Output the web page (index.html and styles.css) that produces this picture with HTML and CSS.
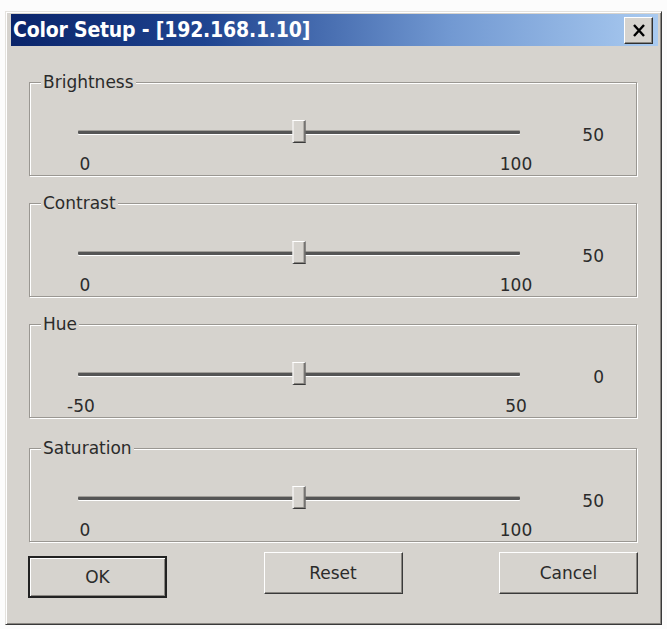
FILE: index.html
```html
<!DOCTYPE html>
<html lang="en">
<head>
  <meta charset="UTF-8" />
  <meta name="viewport" content="width=device-width, initial-scale=1" />
  <title>Color Setup</title>
  <link rel="stylesheet" href="styles.css">
</head>
<body>

  <div class="window">
    <div class="titlebar">
      <span class="title">Color Setup - [192.168.1.10]</span>
      <button class="close" title="Close">
        <svg width="14" height="13" viewBox="0 0 14 13">
          <path d="M2 1 L12 12 M12 1 L2 12" stroke="#000" stroke-width="2.4" fill="none" />
        </svg>
      </button>
    </div>

    <div class="content">
      <fieldset class="group">
        <legend>Brightness</legend>
        <div class="control">
          <div class="slider"><span class="thumb" style="left: 50%"></span></div>
          <span class="value">50</span>
        </div>
        <div class="scale"><span>0</span><span>100</span></div>
      </fieldset>

      <fieldset class="group">
        <legend>Contrast</legend>
        <div class="control">
          <div class="slider"><span class="thumb" style="left: 50%"></span></div>
          <span class="value">50</span>
        </div>
        <div class="scale"><span>0</span><span>100</span></div>
      </fieldset>

      <fieldset class="group">
        <legend>Hue</legend>
        <div class="control">
          <div class="slider"><span class="thumb" style="left: 50%"></span></div>
          <span class="value">0</span>
        </div>
        <div class="scale"><span class="neg">-50</span><span>50</span></div>
      </fieldset>

      <fieldset class="group last">
        <legend>Saturation</legend>
        <div class="control">
          <div class="slider"><span class="thumb" style="left: 50%"></span></div>
          <span class="value">50</span>
        </div>
        <div class="scale"><span>0</span><span>100</span></div>
      </fieldset>

      <div class="buttons">
        <button class="btn default">OK</button>
        <button class="btn">Reset</button>
        <button class="btn">Cancel</button>
      </div>
    </div>
  </div>

</body>
</html>
```

FILE: styles.css
```css
body {
  margin: 0;
  background: #fcfcfc;
  font-family: "DejaVu Sans", Verdana, sans-serif;
  font-size: 17px;
  color: #2b2b2b;
}

/* Ventana */
.window {
  margin: 11px 0 0 5px;
  width: 657px;
  height: 614px;
  box-sizing: border-box;
  background: #d6d3ce;
  border: 1px solid;
  border-color: #e4e2de #3a3a3a #3a3a3a #e4e2de;
  box-shadow: inset 1px 1px 0 #fff, inset -1px -1px 0 #8a8782;
  padding: 2px 3px 0 5px;
}

.titlebar {
  height: 32px;
  display: flex;
  align-items: center;
  justify-content: space-between;
  background: linear-gradient(to right, #0a246a 0%, #1f4490 30%, #7299d2 68%, #a9caf0 100%);
  padding: 0 5px 0 2px;
}

.title {
  font-family: "DejaVu Sans Condensed", "DejaVu Sans", sans-serif;
  font-weight: bold;
  font-size: 21px;
  color: #fff;
  letter-spacing: -0.2px;
}

.close {
  width: 29px;
  height: 27px;
  padding: 0;
  display: flex;
  align-items: center;
  justify-content: center;
  background: #d6d3ce;
  border: 1px solid;
  border-color: #fff #303030 #303030 #fff;
  box-shadow: inset -1px -1px 0 #8a8782;
}

.content {
  padding: 27px 21px 0 18px;
}

/* Grupos */
.group {
  margin: 0 0 18px;
  padding: 0 0 1px;
  border: 1px solid #9a9792;
  box-shadow: inset 1px 1px 0 #fff, 1px 1px 0 #fff;
}

.group.last {
  margin-top: 21px;
}

.group legend {
  margin-left: 11px;
  padding: 0 2px;
  line-height: 18px;
  background: #d6d3ce;
}

.control {
  display: grid;
  grid-template-columns: 442px 1fr;
  align-items: center;
  margin: 28px 0 0 48px;
}

.slider {
  position: relative;
  height: 24px;
}

.slider::before {
  content: "";
  position: absolute;
  left: 0;
  right: 0;
  top: 11px;
  height: 3px;
  background: #555;
  border-radius: 1px;
  box-shadow: 0 1px 0 #fff, 0 -1px 0 #a19e99;
}

.thumb {
  position: absolute;
  top: 0;
  width: 11px;
  height: 21px;
  transform: translateX(-50%);
  background: #d6d3ce;
  border: 1px solid;
  border-color: #fff #3a3a3a #3a3a3a #fff;
  box-shadow: inset -1px -1px 0 #8a8782;
}

.value {
  text-align: right;
  padding: 6px 32px 0 0;
}

.scale {
  display: flex;
  justify-content: space-between;
  width: 471px;
  margin: 9px 0 0 35px;
  line-height: 20px;
}

.scale span {
  width: 40px;
  text-align: center;
}

.scale .neg {
  margin-left: -4px;
}

/* Botones */
.buttons {
  display: flex;
  justify-content: space-between;
  align-items: flex-start;
  margin: -8px -1px 0;
}

.btn {
  width: 139px;
  height: 42px;
  font-family: "DejaVu Sans", Verdana, sans-serif;
  font-size: 17px;
  color: #2b2b2b;
  background: #d6d3ce;
  border: 1px solid;
  border-color: #fff #3a3a3a #3a3a3a #fff;
  box-shadow: inset -1px -1px 0 #8a8782;
}

.btn.default {
  margin-top: 4px;
  border: 2px solid #222;
  box-shadow: inset 1px 1px 0 #fff, inset -1px -1px 0 #8a8782;
}
```
